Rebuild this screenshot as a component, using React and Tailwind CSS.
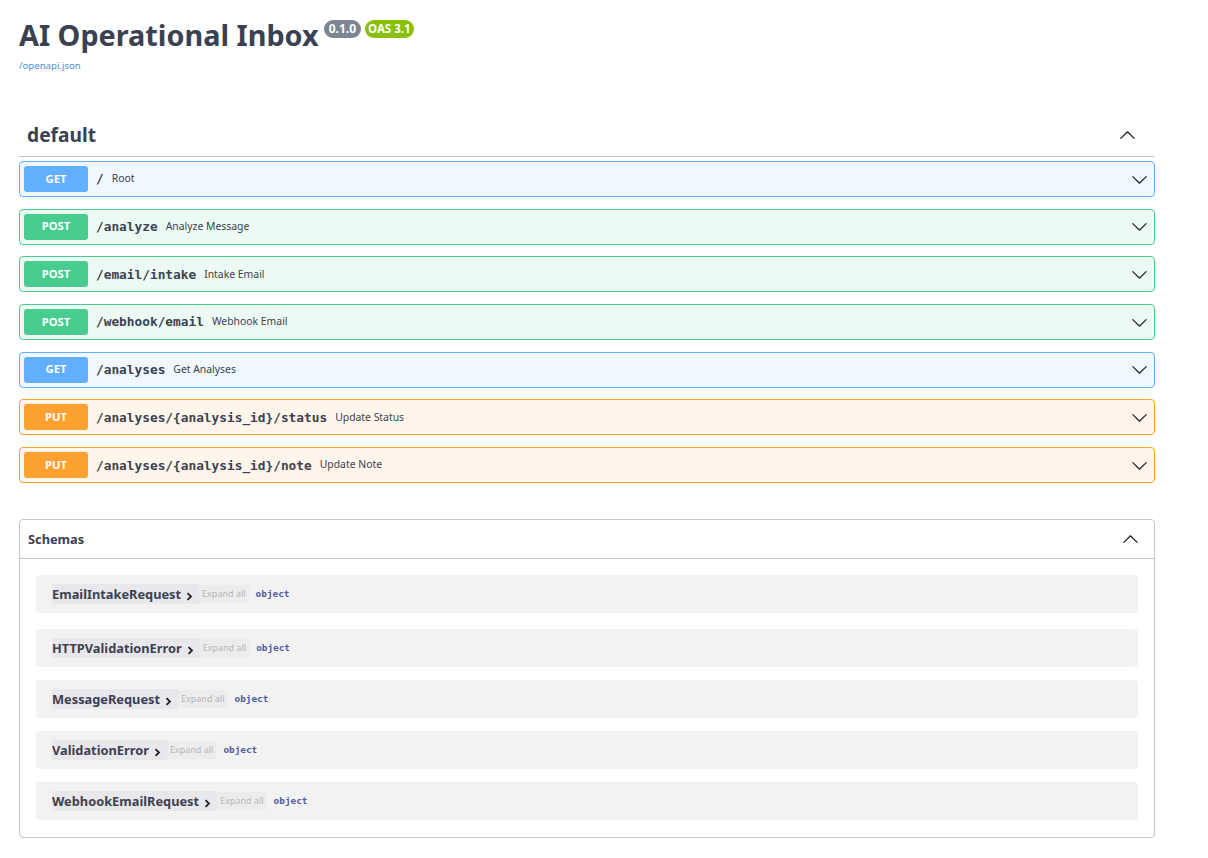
import React from 'react';

const METHOD_STYLES = {
  GET: { row: 'bg-[#eff7ff] border-[#61affe]', badge: 'bg-[#61affe]' },
  POST: { row: 'bg-[#edfaf4] border-[#49cc90]', badge: 'bg-[#49cc90]' },
  PUT: { row: 'bg-[#fff5ea] border-[#fca130]', badge: 'bg-[#fca130]' },
};

const operations = [
  { method: 'GET', path: '/', summary: 'Root' },
  { method: 'POST', path: '/analyze', summary: 'Analyze Message' },
  { method: 'POST', path: '/email/intake', summary: 'Intake Email' },
  { method: 'POST', path: '/webhook/email', summary: 'Webhook Email' },
  { method: 'GET', path: '/analyses', summary: 'Get Analyses' },
  { method: 'PUT', path: '/analyses/{analysis_id}/status', summary: 'Update Status' },
  { method: 'PUT', path: '/analyses/{analysis_id}/note', summary: 'Update Note' },
];

const schemas = [
  'EmailIntakeRequest',
  'HTTPValidationError',
  'MessageRequest',
  'ValidationError',
  'WebhookEmailRequest',
];

// swagger-ui style arrow
const Arrow = ({ up = false, size = 17 }) => (
  <svg
    width={size}
    height={size}
    viewBox="0 0 20 20"
    className={up ? 'rotate-180' : ''}
    fill="#222"
  >
    <path d="M17.418 6.109c.272-.268.709-.268.979 0s.271.701 0 .969l-7.908 7.83c-.27.268-.707.268-.979 0l-7.908-7.83c-.27-.268-.27-.701 0-.969.271-.268.709-.268.979 0L10 13.25l7.418-7.141z" />
  </svg>
);

const SmallChevron = () => (
  <svg width="7" height="9" viewBox="0 0 7 9" className="mt-[5px]">
    <path d="M1.5 1.2 L5 4.5 L1.5 7.8" stroke="#222" strokeWidth="1.8" fill="none" />
  </svg>
);

const OperationRow = ({ method, path, summary }) => {
  const s = METHOD_STYLES[method];
  return (
    <div className={`flex items-center h-[36px] mb-[11.7px] px-[4px] border rounded-[4px] ${s.row}`}>
      <span
        className={`w-[64px] h-[26px] flex items-center justify-center rounded-[3px] text-white text-[11.2px] font-bold ${s.badge}`}
      >
        {method}
      </span>
      <span className="ml-[8px] font-['DejaVu_Sans_Mono',monospace] font-bold text-[12.8px] text-[#3b4151]">
        {path}
      </span>
      <span className="ml-[8px] text-[10.4px] text-[#3b4151]">{summary}</span>
      <span className="ml-auto mr-[2px] flex items-center">
        <Arrow />
      </span>
    </div>
  );
};

const SchemaRow = ({ name, first }) => (
  <div
    className={`h-[38px] flex items-center px-[16px] rounded-[4px] bg-[#f2f2f2] ${first ? 'mb-[16px]' : 'mb-[13px]'}`}
  >
    <span className="flex items-center h-[20px] bg-[#e8e8ec] pr-[6px]">
      <span className="text-[12.8px] font-bold text-[#3b4151]">{name}</span>
      <span className="ml-[5px]">
        <SmallChevron />
      </span>
    </span>
    <span className="h-[18px] flex items-center px-[3px] bg-[#ececec] text-[9px] text-[#b3b7bd]">
      Expand all
    </span>
    <span className="ml-[7px] font-['DejaVu_Sans_Mono',monospace] font-bold text-[9.4px] text-[#4f5b9f]">
      object
    </span>
  </div>
);

export default function App() {
  return (
    <div className="min-h-screen bg-white font-['Noto_Sans',sans-serif] text-[#3b4151]">
      <div className="ml-[19px] w-[1136px] pt-[17px] pb-[20px]">
        {/* info */}
        <div className="flex items-start">
          <h2 className="text-[28.8px] leading-[36px] font-bold text-[#3b4151]">AI Operational Inbox</h2>
          <span className="ml-[5px] mt-[3px] h-[18px] px-[5px] flex items-center rounded-full bg-[#7d8492] text-white text-[12px] font-bold">
            0.1.0
          </span>
          <span className="ml-[4px] mt-[3px] h-[18px] px-[3px] flex items-center rounded-full bg-[#89bf04] text-white text-[11.5px] font-bold">
            OAS 3.1
          </span>
        </div>
        <a className="block mt-[7px] h-[12px] leading-[12px] text-[9.6px] text-[#4990e2]">/openapi.json</a>

        {/* default tag */}
        <div className="mt-[43px] h-[42px] flex items-center pl-[8px] pr-[19px] border-b border-[#c4c6cb]">
          <h3 className="text-[19.2px] font-bold text-[#3b4151]">default</h3>
          <span className="ml-auto flex items-center">
            <Arrow up size={17} />
          </span>
        </div>
        <div className="pt-[4px]">
          {operations.map((op) => (
            <OperationRow key={op.method + op.path} {...op} />
          ))}
        </div>

        {/* schemas */}
        <section className="mt-[36px] border border-[#c4c6cb] rounded-[4px]">
          <div className="h-[39px] flex items-center pl-[8px] pr-[15px] border-b border-[#c4c6cb]">
            <h4 className="text-[12.8px] font-bold text-[#3b4151]">Schemas</h4>
            <span className="ml-auto flex items-center">
              <Arrow up size={17} />
            </span>
          </div>
          <div className="px-[16px] pt-[16px] pb-[4px]">
            {schemas.map((name, i) => (
              <SchemaRow key={name} name={name} first={i === 0} />
            ))}
          </div>
        </section>
      </div>
    </div>
  );
}
